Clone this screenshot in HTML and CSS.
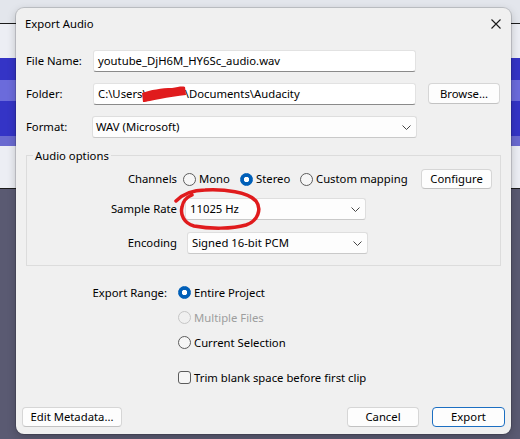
FILE: index.html
```html
<!DOCTYPE html>
<html>
<head>
<meta charset="utf-8">
<title>Export Audio</title>
<link rel="stylesheet" href="styles.css">
</head>
<body>
<div class="desk">
  <div class="dialog">
    <div class="titlebar">
      <span class="title">Export Audio</span>
      <svg class="close" width="10" height="10" viewBox="0 0 10 10"><path d="M0.5 0.5L9.5 9.5M9.5 0.5L0.5 9.5" stroke="#1a1a1a" stroke-width="1.1" fill="none"/></svg>
    </div>

    <div class="top">
      <div class="frow">
        <span class="flabel">File Name:</span>
        <div class="edit">youtube_DjH6M_HY6Sc_audio.wav</div>
      </div>
      <div class="frow">
        <span class="flabel">Folder:</span>
        <div class="edit">C:\Users\<span class="user"></span>\Documents\Audacity</div>
        <div class="btn browse">Browse...</div>
      </div>
      <div class="frow">
        <span class="flabel">Format:</span>
        <div class="combo fmt"><span class="ctext">WAV (Microsoft)</span><svg class="chev" width="9" height="5" viewBox="0 0 9 5"><path d="M0.5 0.5L4.5 4.5L8.5 0.5" stroke="#444" stroke-width="1" fill="none"/></svg></div>
      </div>
    </div>

    <div class="group">
      <div class="legend">Audio options</div>
      <div class="grow channels">
        <span class="glabel">Channels</span>
        <span class="opt mono"><span class="radio"></span>Mono</span>
        <span class="opt stereo"><span class="radio on"></span>Stereo</span>
        <span class="opt custom"><span class="radio"></span>Custom mapping</span>
        <div class="btn configure">Configure</div>
      </div>
      <div class="grow srate">
        <span class="glabel">Sample Rate</span>
        <div class="combo sr"><span class="ctext">11025 Hz</span><svg class="chev" width="9" height="5" viewBox="0 0 9 5"><path d="M0.5 0.5L4.5 4.5L8.5 0.5" stroke="#444" stroke-width="1" fill="none"/></svg></div>
      </div>
      <div class="grow enc">
        <span class="glabel">Encoding</span>
        <div class="combo en"><span class="ctext">Signed 16-bit PCM</span><svg class="chev" width="9" height="5" viewBox="0 0 9 5"><path d="M0.5 0.5L4.5 4.5L8.5 0.5" stroke="#444" stroke-width="1" fill="none"/></svg></div>
      </div>
    </div>

    <div class="range">
      <div class="rrow"><span class="rlabel">Export Range:</span><span class="radio on"></span><span>Entire Project</span></div>
      <div class="rrow disabled"><span class="rlabel"></span><span class="radio dis"></span><span>Multiple Files</span></div>
      <div class="rrow"><span class="rlabel"></span><span class="radio"></span><span>Current Selection</span></div>
      <div class="rrow checkrow"><span class="rlabel"></span><span class="checkbox"></span><span>Trim blank space before first clip</span></div>
    </div>

    <div class="footer">
      <div class="btn meta">Edit Metadata...</div>
      <div class="spacer"></div>
      <div class="btn cancel">Cancel</div>
      <div class="btn export">Export</div>
    </div>
  </div>

  <svg class="marks" width="520" height="439" viewBox="0 0 520 439">
    <path d="M142,93 C150,90 162,88 172,88 C178,87 182,86 185,87 L186,95 C178,96 168,97 160,99 C152,100 147,102 143,102 Z" fill="#e01b1d"/>
    <path d="M176,201 C183,194 193,190 205,190 C225,189 248,192 256,201 C262,209 258,221 246,225 C232,229 210,229 194,226 C184,223 180,215 182,207 C183,201 187,197 192,195" stroke="#e01b1d" stroke-width="3.5" fill="none" stroke-linecap="round" stroke-linejoin="round"/>
  </svg>
</div>
</body>
</html>
```

FILE: styles.css
```css
html, body {
  margin: 0;
  padding: 0;
}

body {
  width: 520px;
  height: 439px;
  overflow: hidden;
  font-family: "Noto Sans", "Segoe UI", "Liberation Sans", sans-serif;
  font-size: 11.3px;
  line-height: 16px;
  color: #000;
  background: linear-gradient(to bottom,
    #e3e6ec 0 23px,
    #1b1b1b 23px 24px,
    #eceef4 24px 58px,
    #3434c6 58px 80px,
    #6b6bdb 80px 101px,
    #3434c6 101px 136px,
    #6a6ad0 136px 146px,
    #eceef4 146px 188px,
    #1b1b1b 188px 189px,
    #5a5a72 189px 439px);
}

.desk {
  position: relative;
  width: 520px;
  height: 439px;
  box-sizing: border-box;
  padding: 8px 0 0 16px;
}

.dialog {
  width: 495px;
  height: 426px;
  box-sizing: border-box;
  background: #f0f0f0;
  border-radius: 8px;
  box-shadow: 0 0 0 1px rgba(0, 0, 0, 0.14), 0 3px 10px rgba(0, 0, 0, 0.22);
  display: flex;
  flex-direction: column;
}

.titlebar {
  height: 31px;
  display: flex;
  align-items: center;
  padding: 0 10px 0 9px;
}

.title {
  flex: 1;
}

.close {
  display: block;
}

.top {
  padding: 11px 0 0 10px;
  display: flex;
  flex-direction: column;
  gap: 11px;
}

.frow {
  display: flex;
  align-items: center;
  height: 22px;
}

.flabel {
  width: 67px;
  flex: none;
}

.edit {
  width: 323px;
  height: 22px;
  box-sizing: border-box;
  background: #fff;
  border: 1px solid #e2e2e2;
  border-bottom-color: #8a8a8a;
  border-radius: 3px;
  padding: 0 0 0 4px;
  display: flex;
  align-items: center;
  white-space: nowrap;
  overflow: hidden;
  flex: none;
}

.user {
  display: inline-block;
  width: 38px;
  flex: none;
}

.btn {
  box-sizing: border-box;
  height: 20px;
  background: #fdfdfd;
  border: 1px solid #d6d6d6;
  border-bottom-color: #c2c2c2;
  border-radius: 4px;
  display: flex;
  align-items: center;
  justify-content: center;
  white-space: nowrap;
  flex: none;
}

.browse {
  width: 72px;
  height: 21px;
  margin-left: 12px;
  align-self: flex-start;
}

.combo {
  height: 22px;
  box-sizing: border-box;
  background: #fdfdfd;
  border: 1px solid #dedede;
  border-bottom-color: #c9c9c9;
  border-radius: 3px;
  display: flex;
  align-items: center;
  padding: 0 5px 0 4px;
  flex: none;
}

.ctext {
  flex: 1;
  white-space: nowrap;
}

.chev {
  display: block;
  flex: none;
}

.fmt {
  width: 325px;
  margin-left: -1px;
  padding-left: 3px;
}

.group {
  margin: 17px 10px 0 10px;
  border: 1px solid #dcdcdc;
  padding-bottom: 11px;
}

.legend {
  width: max-content;
  margin: -8px 0 0 6px;
  padding: 0 2px;
  background: #f0f0f0;
}

.grow {
  display: flex;
  align-items: center;
}

.glabel {
  width: 150px;
  text-align: right;
  flex: none;
  white-space: nowrap;
}

.channels {
  height: 20px;
  margin-top: 5px;
}

.opt {
  display: flex;
  align-items: center;
  flex: none;
  white-space: nowrap;
}

.mono {
  width: 57px;
  margin-left: 6px;
}

.stereo {
  width: 60px;
}

.custom {
  width: 121px;
}

.configure {
  width: 71px;
}

.srate {
  height: 22px;
  margin-top: 9px;
}

.sr {
  width: 181px;
  margin-left: 8px;
}

.enc {
  height: 22px;
  margin-top: 12px;
}

.en {
  width: 181px;
  margin-left: 10px;
}

.radio {
  width: 13px;
  height: 13px;
  box-sizing: border-box;
  border-radius: 50%;
  border: 1px solid #5c5c5c;
  background: #f6f6f6;
  margin-right: 3px;
  flex: none;
}

.radio.on {
  border-color: #005fb8;
  background: radial-gradient(circle, #ffffff 0 2.4px, #005fb8 3px);
}

.radio.dis {
  border-color: #c6c6c6;
  background: #f0f0f0;
}

.checkbox {
  width: 13px;
  height: 13px;
  box-sizing: border-box;
  border-radius: 3px;
  border: 1px solid #5c5c5c;
  background: #f6f6f6;
  margin-right: 3px;
  flex: none;
}

.range {
  margin-top: 14px;
}

.rrow {
  display: flex;
  align-items: center;
  height: 25px;
  white-space: nowrap;
}

.rlabel {
  width: 151px;
  margin-right: 11px;
  text-align: right;
  flex: none;
}

.disabled {
  color: #9e9e9e;
}

.checkrow {
  margin-top: 10px;
}

.footer {
  margin-top: auto;
  padding: 0 6px 7px 6px;
  display: flex;
  align-items: center;
}

.spacer {
  flex: 1;
}

.meta {
  width: 100px;
}

.cancel {
  width: 72px;
}

.export {
  width: 73px;
  margin-left: 13px;
  border-color: #1c6fc2;
}

.marks {
  position: absolute;
  left: 0;
  top: 0;
  pointer-events: none;
}
```
